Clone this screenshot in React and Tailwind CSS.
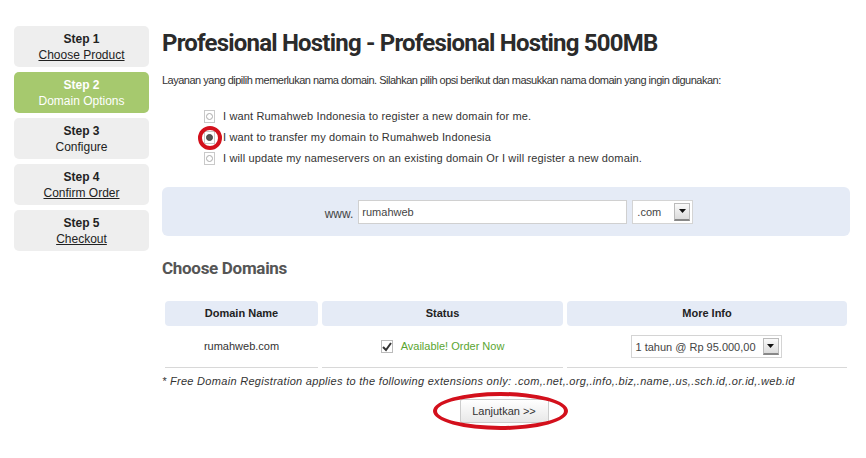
import React from "react";

const steps = [
  { n: 1, label: "Choose Product", link: true },
  { n: 2, label: "Domain Options", active: true },
  { n: 3, label: "Configure" },
  { n: 4, label: "Confirm Order", link: true },
  { n: 5, label: "Checkout", link: true },
];

function FakeSelect({ value, className }) {
  return (
    <div className={"flex items-stretch bg-white border border-[#d4d4d4] " + className}>
      <span className="flex-1 pl-[4px] pt-[3px] text-[11px] text-[#444]">{value}</span>
      <span className="w-[16px] my-[2px] mr-[2px] flex items-center justify-center bg-gradient-to-b from-[#fafafa] to-[#dcdcdc] border border-[#bbb] border-b-[2px] border-b-[#888]">
        <svg width="7" height="4" viewBox="0 0 7 4"><path d="M0 0h7L3.5 4z" fill="#111" /></svg>
      </span>
    </div>
  );
}

function Radio({ checked }) {
  return (
    <span className="relative w-[11px] h-[13px] border border-[#c9c9c9] flex items-center justify-center bg-white">
      <span className={"w-[7px] h-[7px] rounded-full border " + (checked ? "bg-[#555] border-[#444]" : "border-[#aaa]")} />
      {checked && (
        <span className="absolute left-[-7px] top-[-6px] w-[24px] h-[24px] rounded-full border-[4px] border-[#d3101c]" />
      )}
    </span>
  );
}

export default function App() {
  return (
    <div className="w-[866px] h-[458px] bg-white flex font-['Liberation_Sans',Arial,sans-serif] text-[#333] overflow-hidden">
      {/* sidebar */}
      <div className="w-[135px] ml-[14px] mt-[26px] flex flex-col gap-[5px]">
        {steps.map((s) => (
          <div
            key={s.n}
            className={
              "h-[41px] rounded-[5px] flex flex-col items-center justify-center text-[12px] leading-[16px] " +
              (s.active ? "bg-[#a6c96e] text-white" : "bg-[#eeeeee] text-[#222]")
            }
          >
            <span className="font-bold">Step {s.n}</span>
            <span className={s.link ? "underline" : ""}>{s.label}</span>
          </div>
        ))}
      </div>

      {/* main */}
      <div className="ml-[13px] flex-1 pr-[16px]">
        <h1 className="mt-[29px] text-[24px] leading-[28px] font-bold font-['Roboto',sans-serif] tracking-[-0.8px] text-[#2b2b2b]">
          Profesional Hosting - Profesional Hosting 500MB
        </h1>
        <p className="mt-[16px] text-[11px] leading-[14px] tracking-[-0.5px] text-[#333]">
          Layanan yang dipilih memerlukan nama domain. Silahkan pilih opsi berikut dan masukkan nama domain yang ingin digunakan:
        </p>

        <div className="mt-[23px] ml-[42px] flex flex-col gap-[8px] text-[11px] leading-[13px] tracking-[0.15px] text-[#333]">
          <label className="flex items-center gap-[8px]">
            <Radio />
            <span>I want Rumahweb Indonesia to register a new domain for me.</span>
          </label>
          <label className="flex items-center gap-[8px]">
            <Radio checked />
            <span>I want to transfer my domain to Rumahweb Indonesia</span>
          </label>
          <label className="flex items-center gap-[8px]">
            <Radio />
            <span>I will update my nameservers on an existing domain Or I will register a new domain.</span>
          </label>
        </div>

        <div className="mt-[22px] h-[49px] rounded-[6px] bg-[#e5ebf6] flex items-center justify-center gap-[5px] pl-[6px]">
          <span className="text-[12px] text-[#444] mt-[4px]">www.</span>
          <div className="w-[269px] h-[24px] bg-white border border-[#d0d0d0] text-[11px] text-[#444] pl-[3px] pt-[3px]">rumahweb</div>
          <FakeSelect value=".com" className="w-[61px] h-[24px]" />
        </div>

        <h2 className="mt-[22px] text-[17px] leading-[20px] font-bold font-['Roboto',sans-serif] text-[#555] tracking-[-0.3px]">
          Choose Domains
        </h2>

        <div className="mt-[23px] ml-[3px] grid grid-cols-[153px_241px_280px] gap-x-[4px] text-[11px]">
          <div className="h-[25px] rounded-[4px] bg-[#e5ebf6] flex items-center justify-center font-bold text-[#222]">Domain Name</div>
          <div className="h-[25px] rounded-[4px] bg-[#e5ebf6] flex items-center justify-center font-bold text-[#222]">Status</div>
          <div className="h-[25px] rounded-[4px] bg-[#e5ebf6] flex items-center justify-center font-bold text-[#222]">More Info</div>

          <div className="h-[42px] border-b border-[#d8d8d8] flex items-center justify-center text-[#333]">rumahweb.com</div>
          <div className="h-[42px] border-b border-[#d8d8d8] flex items-center justify-center gap-[8px]">
            <span className="w-[12px] h-[13px] border border-[#bbb] bg-white flex items-center justify-center">
              <svg width="10" height="10" viewBox="0 0 10 10"><path d="M1 5l3 3 5-7" stroke="#333" strokeWidth="2" fill="none" /></svg>
            </span>
            <span className="text-[#5aa531]">Available! Order Now</span>
          </div>
          <div className="h-[42px] border-b border-[#d8d8d8] flex items-center justify-center pr-[2px]">
            <FakeSelect value="1 tahun @ Rp 95.000,00" className="w-[151px] h-[23px]" />
          </div>
        </div>

        <p className="mt-[5px] text-[11px] italic tracking-[0.3px] text-[#333]">
          * Free Domain Registration applies to the following extensions only: .com,.net,.org,.info,.biz,.name,.us,.sch.id,.or.id,.web.id
        </p>

        <div className="mt-[8px] flex justify-center pr-[4px]">
          <div className="relative">
            <button className="w-[89px] h-[24px] border border-[#ccc] rounded-[2px] bg-gradient-to-b from-white to-[#e8e8e8] text-[11px] text-[#333]">
              Lanjutkan &gt;&gt;
            </button>
            <span className="absolute left-[-27px] top-[-6px] w-[135px] h-[38px] rounded-[50%] border-[4px] border-[#d3101c]" />
          </div>
        </div>
      </div>
    </div>
  );
}
